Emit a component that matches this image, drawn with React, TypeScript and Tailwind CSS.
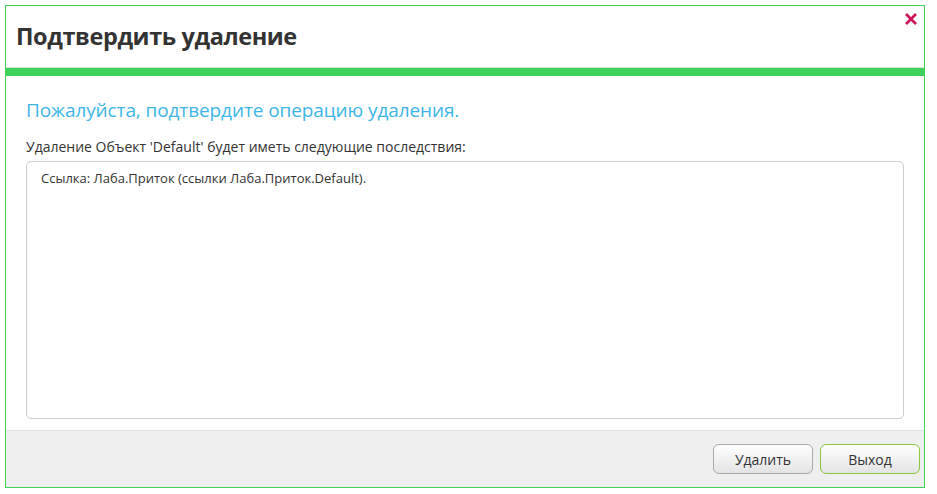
export default function App() {
  return (
    <div className="w-[937px] h-[494px] bg-white p-[5px]" style={{ fontFamily: '"Open Sans", "Noto Sans", sans-serif' }}>
      <div className="relative flex h-[483px] w-[920px] flex-col border border-[#3fd15a] bg-white">
        {/* Header */}
        <div className="flex h-[62px] items-center border-b border-[#d4e8d4] pl-[10px]">
          <h1 className="text-[23.5px] font-bold tracking-[-0.4px] text-[#333]">Подтвердить удаление</h1>
        </div>
        <button className="absolute right-[6px] top-[6px] text-[#d0105a]">
          <svg width="14" height="14" viewBox="0 0 14 14">
            <path d="M2 2 L12 12 M12 2 L2 12" stroke="currentColor" strokeWidth="2.6" />
          </svg>
        </button>
        <div className="h-[8px] bg-[#3fd15a]" />

        {/* Body */}
        <div className="flex flex-1 flex-col px-[20px] pt-[21px] pb-[11px]">
          <div className="text-[19px] leading-[26px] tracking-[-0.1px] text-[#3db6e6]">Пожалуйста, подтвердите операцию удаления.</div>
          <div className="mt-[14px] text-[14px] leading-[20px] text-[#333]">
            Удаление Объект 'Default' будет иметь следующие последствия:
          </div>
          <div className="mt-[4px] flex-1 rounded-[5px] border border-[#cfcfcf] px-[14px] py-[7px] text-[13px] text-[#333]">
            Ссылка: Лаба.Приток (ссылки Лаба.Приток.Default).
          </div>
        </div>

        {/* Footer */}
        <div className="flex h-[57px] items-center justify-end gap-[7px] border-t border-[#e2e2e2] bg-[#efefef] pr-[4px]">
          <button className="h-[30px] w-[100px] rounded-[6px] border border-[#a8a8a8] bg-gradient-to-b from-white to-[#e3e3e3] text-[14px] text-[#333]">
            Удалить
          </button>
          <button className="h-[30px] w-[100px] rounded-[6px] border border-[#8cc63f] bg-gradient-to-b from-white to-[#e3e3e3] text-[14px] text-[#333]">
            Выход
          </button>
        </div>
      </div>
    </div>
  )
}
